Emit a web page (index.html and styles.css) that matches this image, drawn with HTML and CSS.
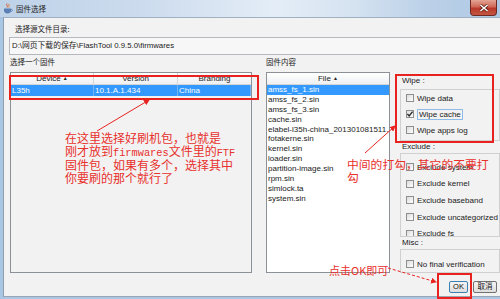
FILE: index.html
```html
<!DOCTYPE html>
<html lang="zh-CN">
<head>
    <meta charset="UTF-8">
    <title>固件选择</title>
    <link rel="stylesheet" href="styles.css">
</head>
<body>
    <div class="window">
        <div class="titlebar">
            <svg class="app-icon" width="10" height="11" viewBox="0 0 10 11">
                <path d="M4 0.5 C2.5 2, 5.5 2.5, 4 4.5" stroke="#d8562a" stroke-width="1" fill="none"/>
                <path d="M6 1 C5 2.5, 7 3, 5.8 4.5" stroke="#e8802e" stroke-width="1" fill="none"/>
                <path d="M1 5.5 H8 V7.5 C8 9.5, 6.5 10.5, 4.5 10.5 C2.5 10.5, 1 9.5, 1 7.5 Z" fill="#5a7fb4"/>
                <path d="M8 6.2 C10 6.2, 10 8.5, 7.7 8.5" stroke="#5a7fb4" stroke-width="0.9" fill="none"/>
            </svg>
            <span class="title">固件选择</span>
            <span class="close">
                <svg width="10" height="8" viewBox="0 0 10 8">
                    <path d="M1.5 1 L8.5 7 M8.5 1 L1.5 7" stroke="#5a1a10" stroke-width="3"/>
                    <path d="M1.5 1 L8.5 7 M8.5 1 L1.5 7" stroke="#ffffff" stroke-width="1.6"/>
                </svg>
            </span>
        </div>

        <div class="client">
            <div class="src-label">选择源文件目录:</div>
            <div class="path">D:\网页下载的保存\FlashTool 0.9.5.0\firmwares</div>

            <div class="main">
                <div class="col-fw">
                    <div class="cap">选择一个固件</div>
                    <div class="table">
                        <div class="thead">
                            <div class="th c-dev">Device <span class="sort">▲</span></div>
                            <div class="th c-ver">Version</div>
                            <div class="th c-brand">Branding</div>
                        </div>
                        <div class="tr sel">
                            <div class="td c-dev">L35h</div>
                            <div class="td c-ver">10.1.A.1.434</div>
                            <div class="td c-brand">China</div>
                        </div>
                    </div>
                </div>

                <div class="col-files">
                    <div class="cap">固件内容</div>
                    <div class="list">
                        <div class="thead">
                            <div class="th c-file">File <span class="sort">▲</span></div>
                        </div>
                        <div class="row sel">amss_fs_1.sin</div>
                        <div class="row">amss_fs_2.sin</div>
                        <div class="row">amss_fs_3.sin</div>
                        <div class="row">cache.sin</div>
                        <div class="row">elabel-l35h-china_201301081511...</div>
                        <div class="row">fotakerne.sin</div>
                        <div class="row">kernel.sin</div>
                        <div class="row">loader.sin</div>
                        <div class="row">partition-image.sin</div>
                        <div class="row">rpm.sin</div>
                        <div class="row">simlock.ta</div>
                        <div class="row">system.sin</div>
                    </div>
                </div>

                <div class="col-opts">
                    <div class="grp-label first">Wipe :</div>
                    <div class="grp grp-wipe">
                        <div class="opt"><span class="box"></span><span>Wipe data</span></div>
                        <div class="opt"><span class="box">
                            <svg width="8" height="8" viewBox="0 0 8 8"><path d="M1.4 4 L3.2 6 L6.6 1.6" stroke="#2a2a2a" stroke-width="1.4" fill="none"/></svg>
                        </span><span class="focus">Wipe cache</span></div>
                        <div class="opt"><span class="box"></span><span>Wipe apps log</span></div>
                    </div>
                    <div class="grp-label">Exclude :</div>
                    <div class="grp grp-excl">
                        <div class="opt"><span class="box"></span><span>Exclude system</span></div>
                        <div class="opt"><span class="box"></span><span>Exclude kernel</span></div>
                        <div class="opt"><span class="box"></span><span>Exclude baseband</span></div>
                        <div class="opt"><span class="box"></span><span>Exclude uncategorized</span></div>
                        <div class="opt"><span class="box"></span><span>Exclude fs</span></div>
                    </div>
                    <div class="grp-label">Misc :</div>
                    <div class="grp grp-misc">
                        <div class="opt"><span class="box"></span><span>No final verification</span></div>
                    </div>
                </div>
            </div>

            <div class="buttons">
                <button class="btn btn-ok">OK</button>
                <button class="btn btn-cancel">取消</button>
            </div>
        </div>

        <!-- annotations drawn on top of the screenshot -->
        <div class="mark mark-fw"></div>
        <div class="mark mark-wipe"></div>
        <div class="mark mark-ok"></div>

        <svg class="arrows" width="500" height="299" viewBox="0 0 500 299">
            <defs>
                <marker id="head" markerWidth="6" markerHeight="6" refX="5" refY="3" orient="auto">
                    <path d="M0,0 L6,3 L0,6 z" fill="#e8231f"/>
                </marker>
            </defs>
            <line x1="97" y1="131" x2="149" y2="100" stroke="#e8231f" stroke-width="1" marker-end="url(#head)"/>
            <line x1="365" y1="153" x2="395" y2="126" stroke="#e8231f" stroke-width="1" marker-end="url(#head)"/>
            <line x1="388" y1="268" x2="436" y2="282" stroke="#e8231f" stroke-width="1" stroke-dasharray="3 2" marker-end="url(#head)"/>
        </svg>

        <div class="note note-fw">在这里选择好刷机包，也就是<br>刚才放到<span class="lat">firmwares</span>文件里的<span class="lat">FTF</span><br>固件包，如果有多个，选择其中<br>你要刷的那个就行了</div>
        <div class="note note-wipe">中间的打勾，其它的不要打<br>勾</div>
        <div class="note note-ok">点击OK即可</div>
    </div>
</body>
</html>
```

FILE: styles.css
```css
body {
    margin: 0;
    font-family: "Liberation Sans", Arial, sans-serif;
    font-size: 8px;
    color: #1a1a1a;
}
.window {
    position: relative;
    width: 500px;
    height: 299px;
    overflow: hidden;
    background: #a9c6e4;
}
.titlebar {
    height: 17px;
    display: flex;
    align-items: center;
    background: linear-gradient(90deg, #bed2e8 0%, #cddcee 30%, #e4edf7 55%, #d6e3f1 70%, #bcd1e8 85%, #aec8e4 100%);
}
.app-icon {
    margin-left: 3px;
}
.title {
    margin-left: 3px;
    font-family: "Noto Sans CJK SC", sans-serif;
    font-size: 7.5px;
    color: #1e1e1e;
}
.close {
    margin-left: auto;
    margin-right: 3px;
    align-self: flex-start;
    width: 27px;
    height: 16px;
    box-sizing: border-box;
    display: flex;
    align-items: center;
    justify-content: center;
    background: linear-gradient(#e3a494 0%, #d06a58 45%, #b8392a 55%, #c45642 100%);
    border: 1px solid #6e2a22;
    border-top: none;
    border-radius: 0 0 4px 4px;
}
.client {
    margin-left: 3px;
    height: 278px;
    background: #f2f2f2;
    border-top: 1px solid #9fb0c2;
    border-left: 1px solid #8e9eb0;
    border-bottom: 1px solid #9aa6b3;
}
.src-label {
    padding: 5px 0 0 11px;
    height: 12px;
    line-height: 12px;
    font-family: "Noto Sans CJK SC", sans-serif;
    font-size: 7.5px;
}
.path {
    margin: 2px -20px 0 5px;
    height: 16px;
    line-height: 16px;
    padding-left: 2px;
    border: 1px solid #b5b8bd;
    background: #f7f7f7;
    font-family: "Liberation Sans", "Noto Sans CJK SC", sans-serif;
    font-size: 7.8px;
}
.main {
    display: flex;
    margin-top: 1px;
    height: 217px;
}
.cap {
    height: 12px;
    line-height: 12px;
    margin-bottom: 4px;
    font-family: "Noto Sans CJK SC", sans-serif;
    font-size: 7.5px;
}
.col-fw {
    margin-left: 6px;
    width: 242px;
}
.table, .list {
    height: 201px;
    box-sizing: border-box;
    border: 1px solid #8c9097;
    background: #f2f2f2;
}
.list {
    background: #ffffff;
}
.thead {
    display: flex;
    height: 11px;
    background: linear-gradient(#ffffff, #eef0f2);
    border-bottom: 1px solid #d5d5d5;
}
.th {
    line-height: 11px;
    text-align: center;
    border-right: 1px solid #d5d5d5;
    color: #222;
}
.sort {
    font-size: 5px;
    vertical-align: 1px;
}
.c-dev { width: 82px; }
.c-ver { width: 83px; }
.c-brand { flex: 1; border-right: none; }
.c-file { flex: 1; border-right: none; }
.tr {
    display: flex;
    height: 11px;
    line-height: 11px;
}
.td {
    padding-left: 1px;
    border-right: 1px solid #74b4f5;
    box-sizing: border-box;
}
.td.c-dev { width: 83px; }
.td.c-ver { width: 84px; }
.tr.sel, .row.sel {
    background: #3399ff;
    color: #ffffff;
}
.col-files {
    margin-left: 14px;
    width: 124px;
}
.row {
    height: 9.9px;
    line-height: 9.9px;
    padding-left: 1px;
    white-space: nowrap;
    overflow: hidden;
}
.col-opts {
    margin-left: 10px;
    width: 100px;
    flex-shrink: 0;
}
.grp-label {
    height: 12px;
    line-height: 12px;
    padding-left: 2px;
}
.grp-label.first {
    margin-top: 19px;
    margin-bottom: 2px;
}
.grp {
    border: 1px solid #d0d0d0;
    overflow: hidden;
}
.grp-wipe {
    padding-bottom: 2px;
}
.grp-excl {
    height: 84px;
    padding-top: 5px;
    box-sizing: border-box;
}
.grp-excl .opt {
    height: 16.6px;
}
.grp-misc {
    height: 24px;
    padding-top: 6px;
    box-sizing: border-box;
}
.opt {
    display: flex;
    align-items: center;
    height: 16px;
    padding-left: 5px;
    white-space: nowrap;
    font-size: 8px;
}
.box {
    flex-shrink: 0;
    width: 8px;
    height: 8px;
    margin-right: 3px;
    box-sizing: border-box;
    border: 1px solid #8e8f8f;
    background: linear-gradient(135deg, #dcdcdc, #ffffff);
    display: flex;
    align-items: center;
    justify-content: center;
}
.box svg {
    flex-shrink: 0;
}
.focus {
    border: 1px solid #8fbbe8;
    padding: 0 1px;
    line-height: 9px;
}
.buttons {
    display: flex;
    justify-content: flex-end;
    gap: 5px;
    margin-top: 8px;
    padding-right: 3px;
}
.btn {
    height: 12px;
    padding: 0;
    border: 1px solid #707070;
    border-radius: 2px;
    background: linear-gradient(#f4f4f4, #dedede);
    font-family: "Liberation Sans", "Noto Sans CJK SC", sans-serif;
    font-size: 7.5px;
    line-height: 10px;
    color: #111;
}
.btn-ok {
    width: 19px;
    border-color: #3c7fb1;
}
.btn-cancel {
    width: 24px;
}
.mark {
    position: absolute;
    box-sizing: border-box;
    border: 2px solid #e8231f;
}
.mark-fw {
    left: 9px;
    top: 75px;
    width: 250px;
    height: 25px;
}
.mark-wipe {
    left: 395px;
    top: 74px;
    width: 99px;
    height: 69px;
}
.mark-ok {
    left: 437px;
    top: 273px;
    width: 35px;
    height: 26px;
}
.arrows {
    position: absolute;
    left: 0;
    top: 0;
}
.note {
    position: absolute;
    color: #e8302c;
    font-family: "Noto Sans CJK SC", sans-serif;
    font-size: 12px;
    line-height: 12.6px;
    white-space: nowrap;
}
.lat {
    font-family: "Liberation Mono", monospace;
    font-size: 10.3px;
}
.note-fw {
    left: 65px;
    top: 132px;
}
.note-wipe {
    left: 347px;
    top: 158px;
    font-size: 11.8px;
}
.note-ok {
    left: 329px;
    top: 264px;
    font-size: 11px;
    line-height: 13px;
}
```
